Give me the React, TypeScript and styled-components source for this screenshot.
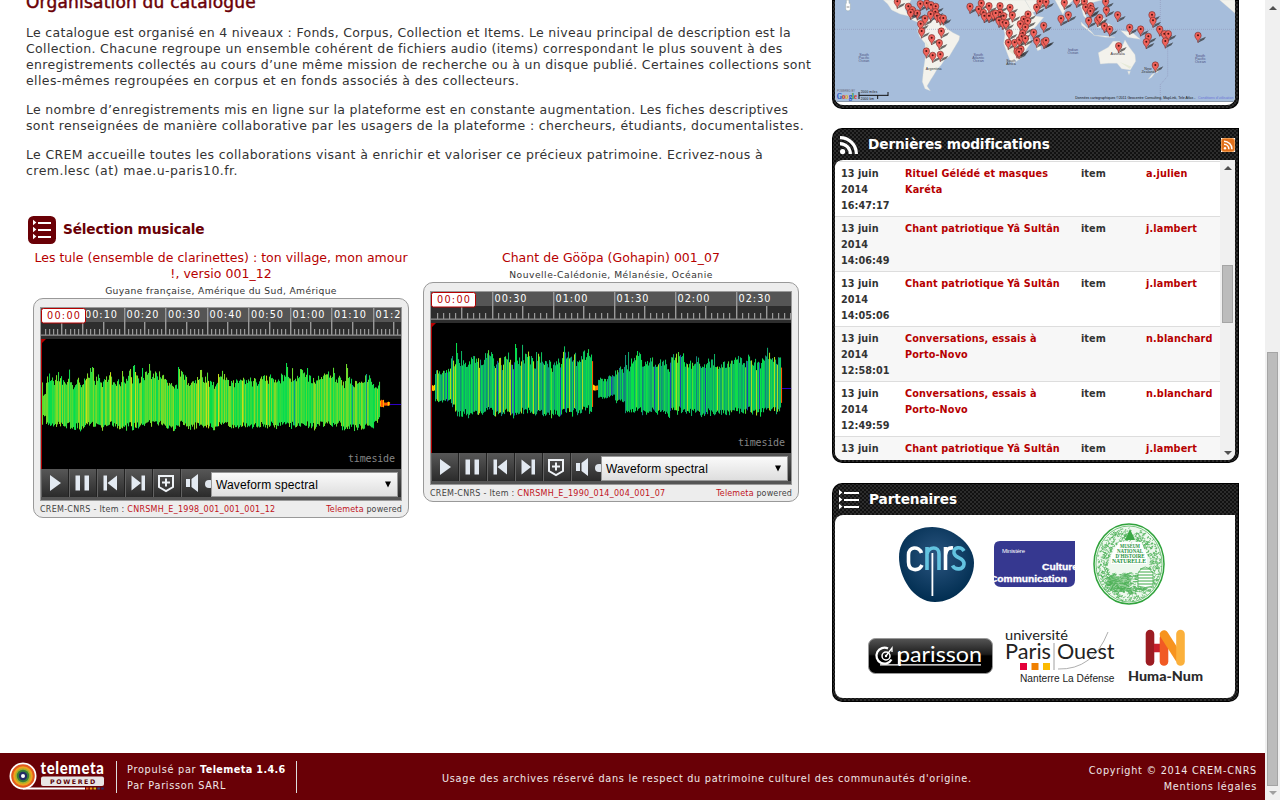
import React from "react";
import styled, { createGlobalStyle } from "styled-components";

const SANS = `"DejaVu Sans", Verdana, sans-serif`;
const ARIAL = `"Liberation Sans", Arial, sans-serif`;

const GlobalStyle = createGlobalStyle`
  * { box-sizing: border-box; }
  html, body { margin: 0; padding: 0; background: #fff; overflow: hidden; }
  body { font-family: ${SANS}; color: #333; }
  p, h1, h2, h3 { margin: 0; }
  svg { display: block; flex: none; }
`;

const Window = styled.div`
  display: flex;
  width: 1280px;
  height: 800px;
  overflow: hidden;
`;
const Page = styled.div`
  width: 1265px;
  display: flex;
  flex-direction: column;
`;
const Body = styled.main`
  height: 753px;
  display: flex;
  overflow: hidden;
`;
const LeftColumn = styled.section`
  width: 832px;
  padding-left: 26px;
  white-space: nowrap;
`;
const RightColumn = styled.aside`
  width: 407px;
  display: flex;
  flex-direction: column;
`;
const PageTitle = styled.h1`
  height: 24px;
  margin-top: -8px;
  font-size: 17px;
  line-height: 20px;
  font-weight: 400;
  letter-spacing: 0.2px;
  color: #6a0006;
  -webkit-text-stroke: 0.45px #6a0006;
`;
const Prose = styled.div`
  padding-top: 9px;
  display: flex;
  flex-direction: column;
  gap: 13px;
`;
const Line = styled.span<{ $ls: number }>`
  display: block;
  font-size: 12.5px;
  line-height: 16px;
  letter-spacing: ${(p) => p.$ls}px;
`;
const SectionHead = styled.div`
  display: flex;
  align-items: center;
  gap: 7px;
  margin: 37px 0 0 2px;
  height: 28px;
`;
const SectionTitle = styled.h2`
  font-size: 13.7px;
  line-height: 20px;
  font-weight: 700;
  color: #6a0006;
  letter-spacing: -0.18px;
  margin-top: -2px;
`;
const PlayerRow = styled.div`
  display: flex;
  align-items: flex-start;
  gap: 14px;
  margin: 6px 0 0 7px;
`;
const Item = styled.article`
  width: 376px;
  text-align: center;
`;
const ItemLink = styled.a`
  display: block;
  color: #b60000;
  font-size: 12.5px;
  line-height: 16px;
  letter-spacing: 0.03px;
`;
const ItemPlace = styled.div<{ $ls: number }>`
  font-size: 9.2px;
  line-height: 16px;
  height: 16px;
  padding-top: 1px;
  letter-spacing: ${(p) => p.$ls}px;
`;
const PlayerFrame = styled.div`
  height: 220px;
  border: 1px solid #999;
  border-radius: 10px;
  background: #ededed;
  padding: 8px 6px 0;
`;
const Screen = styled.div`
  border: 1px solid #999;
  height: 194px;
  background: #555;
  overflow: hidden;
`;
const Controls = styled.div`
  display: flex;
  height: 28px;
  position: relative;
  background: linear-gradient(#575757, #2b2b2b);
`;
const ControlButton = styled.span<{ $last?: boolean }>`
  width: 28px;
  height: 28px;
  border-right: ${(p) => (p.$last ? "0" : "1px solid #222")};
  border-left: 1px solid #626262;
`;
const Knob = styled.span`
  align-self: center;
  width: 9px;
  height: 8px;
  margin: 2px 0 0 -4px;
  border-radius: 4px;
  background: #dfe5ec;
`;
const Select = styled.div`
  position: absolute;
  left: 170px;
  top: 3px;
  width: 187px;
  height: 25px;
  border: 1px solid #999;
  background: linear-gradient(#fafafa, #dedede);
  display: flex;
  align-items: center;
  justify-content: space-between;
  padding: 0 5px 0 4px;
  font: 12px ${ARIAL};
  letter-spacing: 0.14px;
  color: #000;
`;
const Credits = styled.div`
  display: flex;
  justify-content: space-between;
  font-size: 8px;
  line-height: 14px;
  color: #444;
  padding-top: 2px;
  letter-spacing: 0.27px;
`;
const Red = styled.span`
  color: #c0131b;
`;
const Brand = styled.span`
  letter-spacing: 0.15px;
`;

const Panel = styled.section<{ $h: number; $mt?: number; $flatTop?: boolean }>`
  height: ${(p) => p.$h}px;
  margin-top: ${(p) => p.$mt ?? 0}px;
  flex: none;
  padding: 0 4px 0 3px;
  border-radius: ${(p) => (p.$flatTop ? "0 0 10px 10px" : "10px 0 10px 10px")};
  box-shadow: inset 0 0 0 1px #000;
  background-color: #111;
  background-image: radial-gradient(circle at 1px 1px, #2c2c2c 0.9px, transparent 1.2px),
    radial-gradient(circle at 3px 3px, #2c2c2c 0.9px, transparent 1.2px);
  background-size: 4px 4px;
`;
const PanelHead = styled.header`
  height: 32px;
  display: flex;
  align-items: center;
  padding: 2px 0 0 4px;
`;
const PanelTitle = styled.h2`
  flex: 1;
  color: #fff;
  font-size: 13.7px;
  line-height: 20px;
  font-weight: 700;
  letter-spacing: -0.13px;
  padding-left: 9px;
  margin-top: -2px;
`;
const PanelBody = styled.div<{ $h: number }>`
  height: ${(p) => p.$h}px;
  background: #fff;
  border-radius: 8px 0 8px 8px;
  overflow: hidden;
  display: flex;
`;
const MapBody = styled.div`
  height: 105px;
  background: #fff;
  border-radius: 0 0 8px 8px;
  overflow: hidden;
`;
const Table = styled.div`
  width: 385px;
  padding-top: 1px;
`;
const Row = styled.div<{ $alt: boolean }>`
  display: grid;
  grid-template-columns: 64px 176px 65px 1fr;
  height: 55px;
  border-top: 1px solid #ddd;
  background: ${(p) => (p.$alt ? "#f7f7f7" : "#fff")};
  padding: 4px 0 0 6px;
  font-size: 9.7px;
  line-height: 16px;
  font-weight: 700;
  white-space: nowrap;
`;
const Cell = styled.span<{ $link?: boolean }>`
  color: ${(p) => (p.$link ? "#b60000" : "#333")};
  letter-spacing: ${(p) => (p.$link ? 0.13 : 0.05)}px;
  white-space: pre-line;
`;
const ScrollTrack = styled.div<{ $pad: number }>`
  width: 15px;
  background: #f0f0f0;
  display: flex;
  flex-direction: column;
  align-items: center;
  padding-top: ${(p) => p.$pad}px;
`;
const Thumb = styled.div<{ $h: number; $mt: number }>`
  width: 11px;
  height: ${(p) => p.$h}px;
  margin-top: ${(p) => p.$mt}px;
  background: #bcbcbc;
  border: 1px solid #a5a5a5;
  flex: none;
`;
const Arrow = styled.i<{ $down?: boolean; $mt?: number; $c?: string }>`
  border: 4px solid transparent;
  border-top: ${(p) => (p.$down ? `4px solid ${p.$c ?? "#505050"}` : "0")};
  border-bottom: ${(p) => (p.$down ? "0" : `4px solid ${p.$c ?? "#505050"}`)};
  margin-top: ${(p) => p.$mt ?? 0}px;
`;
const Logos = styled.div`
  flex: 1;
  display: flex;
  flex-direction: column;
`;
const LogoRow = styled.div<{ $h: number; $pl: number }>`
  height: ${(p) => p.$h}px;
  padding-left: ${(p) => p.$pl}px;
  display: flex;
  align-items: center;
`;
const Gap = styled.span<{ $w: number }>`
  width: ${(p) => p.$w}px;
  flex: none;
`;

const Footer = styled.footer`
  height: 47px;
  background: #690006;
  color: #f0e8e8;
  display: flex;
  align-items: flex-start;
  font-size: 9.7px;
  line-height: 16px;
  letter-spacing: 0.73px;
  padding: 8px 8px 0 9px;
  white-space: nowrap;
`;
const Powered = styled.div`
  margin-left: 11px;
  width: 181px;
  height: 32px;
  border: solid #ddd;
  border-width: 0 1px;
  padding: 1px 0 0 10px;
`;
const Product = styled.b`
  letter-spacing: 0.36px;
  color: #fff;
`;
const Usage = styled.div`
  margin: 10px 0 0 145px;
  width: 531px;
`;
const Legal = styled.div`
  flex: 1;
  text-align: right;
  padding-top: 2px;
`;

const ListIcon = ({ boxed }: { boxed?: boolean }) => (
  <svg width={boxed ? 28 : 21} height={boxed ? 28 : 22} viewBox={boxed ? "0 0 28 28" : "5 3 21 22"}>
    {boxed && <rect width="28" height="28" rx="5.5" fill="#6a0006" />}
    {[6.5, 13.5, 20.5].map((y) => (
      <g key={y} fill="#fff">
        <path d={`M5 ${y - 2.8}L8.4 ${y}L5 ${y + 2.8}Z`} />
        <rect x={10} y={y - 0.5} width={boxed ? 13 : 15} height="2" />
      </g>
    ))}
  </svg>
);

const FeedIcon = () => (
  <svg width="20" height="20" viewBox="0 0 20 20" fill="none" stroke="#fff" strokeWidth="3.2">
    <circle cx="3.6" cy="16.6" r="2.6" fill="#fff" stroke="none" />
    <path d="M1 8.6A10.3 10.3 0 0 1 11.3 19M1 2.6A16.4 16.4 0 0 1 17.4 19" />
  </svg>
);
const FeedBadge = () => (
  <svg width="14" height="14" viewBox="0 0 14 14" fill="none" stroke="#fff" strokeWidth="1.5">
    <rect width="14" height="14" rx="2" fill="#e2711d" />
    <rect x="0.5" y="0.5" width="13" height="13" rx="2" stroke="#f09a4e" strokeWidth="1" />
    <circle cx="4" cy="10.2" r="1.2" fill="#fff" stroke="none" />
    <path d="M3 6.3A5 5 0 0 1 7.9 11.3M3 3.2A8 8 0 0 1 11 11.3" />
  </svg>
);

function makeRandom(seed: number) {
  let s = seed;
  return () => {
    s = (s * 1664525 + 1013904223) % 4294967296;
    return s / 4294967296;
  };
}

interface Segment {
  to: number;
  amp: number;
  kind: "green" | "mixed" | "hot" | "line";
}
interface Track {
  title: string[];
  place: string;
  placeLs: number;
  code: string;
  step: number;
  labels: string[];
  seed: number;
  segments: Segment[];
  peaks: Record<number, number>;
}

const GREENS = ["#35dc3c", "#4fdc35", "#1fdd48", "#6fdb2c", "#08dd4c", "#8ad926", "#2fdc3e", "#5bdb30", "#80da28", "#12d850"];
const MIXED = ["#0bc25c", "#08df4a", "#0ea66c", "#12907a", "#1bd44a", "#0cb062", "#4fdc35", "#16827d", "#04d854", "#0bc25c", "#10b566", "#0ea66c", "#0bc25c", "#a8df20"];
const HOT = ["#ffb000", "#ff7a00", "#ffd800", "#ff5a00"];

function columns(t: Track) {
  const rnd = makeRandom(t.seed);
  const out: { x: number; top: number; bottom: number; fill: string }[] = [];
  let drift = 0;
  for (let x = 0; x < 359; x++) {
    const seg = t.segments.find((s) => x < s.to)!;
    if (seg.kind === "line") {
      out.push({ x, top: 65, bottom: 66, fill: "#2d00c4" });
      continue;
    }
    drift = drift * 0.68 + (rnd() - 0.5) * 0.4;
    const spike = rnd() > 0.93 ? 1.22 : 1;
    const up = t.peaks[x] ?? seg.amp * (1 + drift) * spike * (0.88 + rnd() * 0.24);
    const down = seg.amp * (0.94 - drift * 0.45) * (0.82 + rnd() * 0.26);
    const palette = seg.kind === "hot" ? HOT : seg.kind === "green" ? GREENS : MIXED;
    let fill = palette[Math.floor(rnd() * palette.length)];
    if (seg.kind === "green" && rnd() > 0.97) fill = x > 250 ? "#12948a" : "#c8e018";
    if (seg.kind === "mixed" && rnd() > 0.97) fill = "#2148a8";
    out.push({ x, top: 65 - up, bottom: 65 + down, fill });
  }
  return out;
}

const Scope = ({ track }: { track: Track }) => {
  const ticks = [];
  for (let i = 1; i * (track.step / 10) < 360; i++) {
    const x = i * (track.step / 10);
    const y = i % 10 === 0 ? 0 : i % 5 === 0 ? 14 : 21;
    ticks.push(<rect key={i} x={Math.floor(x)} y={y} width={i % 5 === 0 ? 1.4 : 1.2} height={27 - y} fill="#999" />);
  }
  return (
    <svg width="360" height="161" viewBox="0 0 360 161" fontFamily={SANS}>
      <rect width="360" height="14" fill="#555" />
      <rect y="14" width="360" height="17" fill="#2d2d2d" />
      {ticks}
      <rect y="26.5" width="360" height="1.3" fill="#8e8e8e" />
      {track.labels.map((l, i) => (
        <text key={l} x={(i + 1) * track.step + 2.5} y="10" fontSize="9.7" fill="#fff" textLength={l.length === 4 ? 25 : 32}>
          {l}
        </text>
      ))}
      <rect x="0.5" y="0.5" width="44" height="14.500" rx="2" fill="#fff" stroke="#b60000" />
      <text x="6" y="11" fontSize="9.7" fill="#b60000" textLength="33">00:00</text>
      <g transform="translate(0 31)">
        <rect width="360" height="130" fill="#000" />
        {columns(track).map((c) => (
          <rect key={c.x} x={c.x + 1} y={c.top} width="1.05" height={c.bottom - c.top} fill={c.fill} />
        ))}
        <rect width="1" height="130" fill="#b60000" />
        <path d="M0 0H5L0 5Z" fill="#b60000" />
        <text x="307" y="123" fontFamily='"DejaVu Sans Mono", monospace' fontSize="10" fill="#858585" textLength="47">timeside</text>
      </g>
    </svg>
  );
};

const ICON_PATHS = [
  "M8 6V22L19 14Z",
  "M5.500 6.5H10V21.5H5.500ZM14.500 6.5H19V21.5H14.500Z",
  "M5.5 6.5H9V21.5H5.5ZM19 6.5V21.5L9.500 14Z",
  "M15.500 6.5H19V21.5H15.500ZM5.500 6.5V21.5L15 14Z",
];

const Player = ({ track }: { track: Track }) => (
  <Item>
    {track.title.map((t) => (
      <ItemLink key={t}>{t}</ItemLink>
    ))}
    <ItemPlace $ls={track.placeLs}>{track.place}</ItemPlace>
    <PlayerFrame>
      <Screen>
        <Scope track={track} />
        <Controls>
          {ICON_PATHS.map((d) => (
            <ControlButton key={d}>
              <svg width="26" height="28" viewBox="0 0 26 28"><path d={d} fill="#e3eaf2" /></svg>
            </ControlButton>
          ))}
          <ControlButton>
            <svg width="26" height="28" viewBox="0 0 26 28">
              <path d="M5 7H19V18L12 22L5 18Z" fill="none" stroke="#eef2f6" strokeWidth="2" />
              <path d="M12 9.5V17.5M8 13.5H16" stroke="#eef2f6" strokeWidth="2" />
            </svg>
          </ControlButton>
          <ControlButton $last>
            <svg width="26" height="28" viewBox="0 0 26 28">
              <path d="M4 10H8V18H4ZM9.5 10L16 5V23L9.5 18Z" fill="#e3eaf2" />
            </svg>
          </ControlButton>
          <Knob />
          <Select>
            <span>Waveform spectral</span>
            <svg width="8" height="8" viewBox="0 0 8 8"><path d="M1 0.5H7L4 6.500Z" /></svg>
          </Select>
        </Controls>
      </Screen>
      <Credits>
        <span>CREM-CNRS - Item : <Red>{track.code}</Red></span>
        <Brand><Red>Telemeta</Red> powered</Brand>
      </Credits>
    </PlayerFrame>
  </Item>
);

const TRACKS: Track[] = [
  {
    title: ["Les tule (ensemble de clarinettes) : ton village, mon amour", "!, versio 001_12"],
    place: "Guyane française, Amérique du Sud, Amérique",
    placeLs: 0.36,
    code: "CNRSMH_E_1998_001_001_001_12",
    step: 41.5,
    labels: ["00:10", "00:20", "00:30", "00:40", "00:50", "01:00", "01:10", "01:2"],
    seed: 11,
    segments: [
      { to: 1, amp: 25, kind: "green" },
      { to: 4, amp: 12, kind: "green" },
      { to: 332, amp: 24, kind: "green" },
      { to: 338, amp: 18, kind: "green" },
      { to: 342, amp: 3.5, kind: "hot" },
      { to: 348, amp: 1.8, kind: "hot" },
      { to: 360, amp: 1, kind: "line" },
    ],
    peaks: { 48: 36, 50: 37, 51: 36, 80: 33, 91: 38, 92: 39, 93: 32, 100: 36, 136: 37, 137: 35, 158: 34, 244: 41, 245: 37, 258: 35, 304: 40, 305: 36, 324: 30 },
  },
  {
    title: ["Chant de Gööpa (Gohapin) 001_07"],
    place: "Nouvelle-Calédonie, Mélanésie, Océanie",
    placeLs: 0.5,
    code: "CNRSMH_E_1990_014_004_001_07",
    step: 61,
    labels: ["00:30", "01:00", "01:30", "02:00", "02:30"],
    seed: 77,
    segments: [
      { to: 3, amp: 3, kind: "hot" },
      { to: 19, amp: 15, kind: "mixed" },
      { to: 23, amp: 22, kind: "mixed" },
      { to: 160, amp: 27, kind: "mixed" },
      { to: 161, amp: 23, kind: "hot" },
      { to: 166, amp: 2.5, kind: "hot" },
      { to: 183, amp: 10, kind: "mixed" },
      { to: 193, amp: 16, kind: "mixed" },
      { to: 349, amp: 26, kind: "mixed" },
      { to: 350, amp: 18, kind: "hot" },
      { to: 360, amp: 1, kind: "line" },
    ],
    peaks: { 20: 32, 24: 45, 25: 35, 29: 37, 83: 44, 84: 40, 104: 36, 193: 33, 196: 36, 205: 37, 206: 32, 282: 34 },
  },
];

const PINS = "217,5 250,20 262,30 277,40 257,38 286,12 305,10 318,15 332,20 331,36 317,43 336,48 346,55 355,55 300,56 287,72 290,94 349,94 320,114 343,129 304,154 323,167 346,164 435,20 469,10 461,28 475,38 492,18 478,48 492,48 505,43 525,18 525,38 536,48 512,40 555,23 562,46 522,62 533,68 543,70 609,43 596,58 608,63 586,72 601,82 553,99 593,100 550,128 569,128 583,120 590,110 601,116 626,98 635,122 656,77 657,126 663,122 588,148 576,154 582,156 635,22 645,5 663,6 718,8 708,56 730,45 755,2 778,5 782,22 797,18 800,28 796,34 842,5 844,30 878,45 791,62 818,60 824,53 838,78 854,88 914,83 947,88 970,110 964,126 881,138 981,45 984,62 1004,88 1018,102 1030,102 1021,124 1119,107 991,196"
  .split(" ")
  .map((p) => p.split(",").map(Number));

const SEA_LABELS: [number, number, string[]][] = [
  [117, 166, ["South", "Pacific", "Ocean"]],
  [460, 166, ["South", "Atlantic", "Ocean"]],
  [744, 150, ["Indian", "Ocean"]],
  [1126, 168, ["South", "Pacific", "Ocean"]],
];
const LAND_LABELS: [number, number, string][] = [
  [878, 164, "Australia"],
  [326, 211, "Argentina"],
  [558, 187, "South"],
  [558, 194, "Africa"],
  [969, 211, "New"],
  [969, 219, "Zealand"],
];

const WorldMap = () => (
  <svg width="400" height="102" viewBox="30 0 1200 306" fontFamily={ARIAL}>
    <rect x="30" width="1200" height="306" fill="#a6bddb" />
    <g fill="#f3f2ec" stroke="#d7dbd6" strokeWidth="1">
      <path d="M175 0L188 12L200 30L225 42L250 48L262 60L282 68L286 60L262 50L245 38L240 25L252 12L258 0Z" />
      <path d="M282 68L278 95L285 112L300 130L302 165L296 205L292 245L300 266L316 272L306 258L318 238L328 222L336 208L348 196L358 180L372 170L384 150L402 120L404 108L384 98L366 86L352 68L330 60L300 56Z" />
      <path d="M470 0L455 22L460 42L476 54L505 54L522 60L534 78L540 104L536 130L546 158L556 184L568 188L592 172L604 148L618 128L612 100L636 76L656 52L630 48L612 20L600 0Z" />
      <path d="M600 0L622 38L650 26L672 8L668 0ZM690 0L705 28L714 44L724 22L744 0ZM750 0L768 20L776 48L786 58L780 34L796 40L808 26L800 8L830 0Z" />
      <path d="M644 124L648 148L638 152L632 138ZM768 66L800 96L808 106L770 76ZM806 106L842 112L870 112L842 108ZM815 60L838 54L836 84L816 82ZM848 70L862 78L852 98ZM888 92L920 96L946 118L908 112ZM840 18L850 30L846 44L838 34Z" />
      <path d="M820 158L850 142L864 124L884 124L892 138L900 120L912 140L930 164L932 184L916 210L890 206L876 190L850 190L826 192ZM908 214L916 214L912 224ZM992 200L1004 208L996 218L986 214ZM990 218L980 232L970 238L980 224Z" />
      <path d="M278 8L312 8L340 14L330 20L290 14ZM1184 0L1230 40V0Z" />
    </g>
    <path d="M548 150L570 140L590 158L566 164ZM340 140L352 130L350 160ZM300 120L312 140L306 150ZM884 186L920 200L914 206Z" fill="#e6ead8" />
    <path d="M30 88H1230M1006 0V86M1028 110V228L1006 254V306" fill="none" stroke="#8d8fb5" strokeWidth="1.6" strokeDasharray="3 3" />
    <g fontSize="11" fill="#4a5080" textAnchor="middle">
      {SEA_LABELS.map(([x, y, ls]) => ls.map((l, i) => <text key={`${x}${l}`} x={x} y={y + 2 + i * 9}>{l}</text>))}
    </g>
    <g fontSize="11" fill="#333" textAnchor="middle">
      {LAND_LABELS.map(([x, y, l]) => <text key={l + y} x={x} y={y}>{l}</text>)}
    </g>
    {PINS.map(([x, y]) => (
      <g key={`${x}-${y}`}>
        <path d={`M${x} ${y + 21}L${x + 7} ${y + 10}L${x + 24} ${y + 3}L${x + 18} ${y + 12}Z`} fill="#222" opacity="0.65" />
        <path d={`M${x} ${y + 21}C${x - 1} ${y + 10} ${x - 10} ${y + 8} ${x - 9.5} ${y - 1}A9.5 9.5 0 0 1 ${x + 9.5} ${y - 1}C${x + 10} ${y + 8} ${x + 1} ${y + 10} ${x} ${y + 21}Z`} fill="#f0625a" stroke="#722a27" strokeWidth="1.8" />
        <circle cx={x} cy={y - 1} r="3" fill="#4a1210" />
      </g>
    ))}
    <path d="M64 0H72V10H76V28Q69 38 62 28V10H64Z" fill="#fff" stroke="#9aa" strokeWidth="1.5" />
    <path d="M65 21H73" stroke="#555" strokeWidth="2" />
    <text x="35" y="296" fontSize="25" fontWeight="700" fontFamily={`"Liberation Serif", serif`} textLength="61" lengthAdjust="spacingAndGlyphs">
      <tspan fill="#1f4fc4">G</tspan><tspan fill="#d6352b">o</tspan><tspan fill="#e3b21c">o</tspan><tspan fill="#1f4fc4">g</tspan><tspan fill="#2f9a44">l</tspan><tspan fill="#d6352b">e</tspan>
    </text>
    <text x="36" y="277" fontSize="8" fill="#667">POWERED BY</text>
    <text x="107" y="278" fontSize="9.5" fill="#111" textLength="50">2000 miles</text>
    <text x="107" y="299" fontSize="9.5" fill="#111" textLength="40">2000 km</text>
    <path d="M102 276V297M102 286H189M189 276V288M158 286V297" stroke="#111" strokeWidth="3" fill="none" />
    <text x="751" y="297" fontSize="10.5" fill="#111" textLength="360">Données cartographiques ©2011 Geocentre Consulting, MapLink, Tele Atlas -</text>
    <text x="1119" y="297" fontSize="10.5" fill="#6a72d8" textLength="106">Conditions d'utilisation</text>
    <rect x="30" y="303" width="1200" height="3" fill="#8a97a8" />
  </svg>
);

const MODIFICATIONS = [
  ["16:47:17", "Rituel Gélédé et masques\nKaréta", "a.julien"],
  ["14:06:49", "Chant patriotique Yâ Sultân", "j.lambert"],
  ["14:05:06", "Chant patriotique Yâ Sultân", "j.lambert"],
  ["12:58:01", "Conversations, essais à\nPorto-Novo", "n.blanchard"],
  ["12:49:59", "Conversations, essais à\nPorto-Novo", "n.blanchard"],
  ["", "Chant patriotique Yâ Sultân", "j.lambert"],
];

const CnrsLogo = () => (
  <svg width="75" height="75" viewBox="0 0 75 75">
    <defs>
      <radialGradient id="cnrs" cx="0.5" cy="0.4" r="0.6">
        <stop offset="0" stopColor="#2b5580" /><stop offset="1" stopColor="#002d50" />
      </radialGradient>
    </defs>
    <path d="M33 0C52 0 75 16 75 36C75 56 57 75 36 75C14 75 0 50 0 30C0 12 14 0 33 0Z" fill="url(#cnrs)" />
    <g fill="none" strokeWidth="3.6" strokeLinecap="butt">
      <path d="M22.500 26C20 19 9.500 19 9.500 28V35C9.500 44.500 20 44.500 23 38" stroke="#fff" />
      <path d="M28 43V20M28 27C30 19 40 19 40 27V43" stroke="#63c3e0" />
      <path d="M46.500 43V20M46.500 28C47.500 21.500 50 20.500 54 21" stroke="#fff" />
      <path d="M65 24C62 19 54 20 55 26C56 32 65.500 30 65 37C64.500 43 56 43.500 53.500 38.500" stroke="#63c3e0" />
    </g>
    <rect x="32.500" y="26" width="1.800" height="43" fill="#fff" />
  </svg>
);

const CultureLogo = () => (
  <svg width="81" height="46" viewBox="0 0 81 46" fontFamily={ARIAL} fill="#fff">
    <path d="M6 0H81V39Q81 46 74 46H7Q0 46 0 39V6Q0 0 6 0Z" fill="#363890" />
    <text x="8" y="11.500" fontSize="6" textLength="23">Ministère</text>
    <g fontWeight="700" fontSize="9.600" stroke="#fff" strokeWidth="0.350">
      <text x="48" y="29" textLength="36" lengthAdjust="spacingAndGlyphs">Culture</text>
      <text x="-4" y="40.500" textLength="77" lengthAdjust="spacingAndGlyphs">Communication</text>
    </g>
  </svg>
);

const foliage = (() => {
  const rnd = makeRandom(5);
  const out: string[] = [];
  for (let i = 0; i < 620; i++) {
    const a = rnd() * Math.PI * 2;
    const r = 0.62 + rnd() * 0.32;
    const x = 36 + Math.cos(a) * 34 * r;
    const y = 41 + Math.sin(a) * 39 * r;
    out.push(`M${x.toFixed(1)} ${y.toFixed(1)}q${(rnd() * 4 - 2).toFixed(1)} ${(rnd() * 3).toFixed(1)} ${(rnd() * 5 - 2.5).toFixed(1)} ${(rnd() * 4 - 2).toFixed(1)}`);
  }
  for (let i = 0; i < 260; i++) {
    const x = 12 + rnd() * 44;
    const y = 50 + rnd() * 19;
    out.push(`M${x.toFixed(1)} ${y.toFixed(1)}q1 ${(rnd() * 2 - 1).toFixed(1)} ${(2 + rnd() * 2).toFixed(1)} ${(rnd() * 2 - 1).toFixed(1)}`);
  }
  return out.join("");
})();

const MuseumLogo = () => (
  <svg width="72" height="82" viewBox="0 0 72 82" fontFamily={`"Liberation Serif", serif`}>
    <ellipse cx="36" cy="41" rx="35" ry="40" fill="#eef8ee" stroke="#2fa33b" strokeWidth="1.5" />
    <ellipse cx="36" cy="41" rx="33" ry="38" fill="none" stroke="#2fa33b" strokeWidth="0.6" />
    <path d={foliage} fill="none" stroke="#4fb259" strokeWidth="0.750" />
    <path d="M37 6L42 17H32Z" fill="#3aa845" />
    <path d="M16 62V56Q22 50 28 55L36 54V66L26 68Z" fill="#4bb054" opacity="0.5" />
    <path d="M45 63V50Q52 38 60 50V63Q52 66 45 63Z" fill="#fff" stroke="#3aa845" strokeWidth="0.7" />
    <path d="M47 46H58M45.500 49H60M45 52H60M45 55H60M45 58H60M45 61H60" stroke="#3aa845" strokeWidth="1" />
    <path d="M26 19H48L54 32V41H18V32Z" fill="#fff" />
    <g fill="#23913a" fontWeight="700" fontSize="5.600" textAnchor="middle">
      <text x="37" y="25" textLength="20" lengthAdjust="spacingAndGlyphs">MUSÉUM</text>
      <text x="37" y="30" textLength="26" lengthAdjust="spacingAndGlyphs">NATIONAL</text>
      <text x="37" y="35" textLength="29" lengthAdjust="spacingAndGlyphs">D'HISTOIRE</text>
      <text x="36" y="40.300" textLength="34">NATURELLE</text>
    </g>
  </svg>
);

const ParissonLogo = () => (
  <svg width="125" height="36" viewBox="0 0 125 36">
    <defs>
      <linearGradient id="gloss" x1="0" y1="0" x2="0" y2="1">
        <stop offset="0" stopColor="#555" /><stop offset="0.450" stopColor="#1c1c1c" />
        <stop offset="0.500" stopColor="#000" /><stop offset="1" stopColor="#000" />
      </linearGradient>
    </defs>
    <rect x="0.5" y="0.5" width="124" height="35" rx="7" fill="url(#gloss)" stroke="#999" />
    <g fill="none" stroke="#fff">
      <path d="M20 10.500A8 8 0 1 0 23.500 21.500" strokeWidth="2.200" />
      <circle cx="18" cy="18" r="4" strokeWidth="1.500" />
      <path d="M18 18L24 10V14M12 26.800H113M30.500 14V27" strokeWidth="1.300" />
    </g>
    <circle cx="18" cy="18" r="1.200" fill="#fff" />
    <text x="29" y="23.500" fontFamily="Lato, sans-serif" fontSize="21" fill="#fff" textLength="85" lengthAdjust="spacingAndGlyphs">parisson</text>
  </svg>
);

const UniversityLogo = () => (
  <svg width="110" height="56" viewBox="0 0 110 56" fontFamily="Lato, sans-serif" fill="#222">
    <path d="M103 4Q88 42 53 41" fill="none" stroke="#999" strokeWidth="0.800" />
    <path d="M49 15V42" stroke="#888" strokeWidth="0.8" />
    <text x="0" y="11.500" fontSize="13" textLength="63" lengthAdjust="spacingAndGlyphs">université</text>
    <text x="0" y="30.500" fontSize="21.500" textLength="46" lengthAdjust="spacingAndGlyphs">Paris</text>
    <text x="52" y="30.500" fontSize="21.500" textLength="57.500" lengthAdjust="spacingAndGlyphs">Ouest</text>
    <rect x="15" y="35" width="7" height="7" fill="#e4003a" />
    <rect x="26.500" y="35" width="7" height="7" fill="#f08000" />
    <rect x="38" y="35" width="7" height="7" fill="#fbba00" />
    <text x="15" y="53.500" fontSize="10" fontFamily={ARIAL} textLength="94.500" lengthAdjust="spacingAndGlyphs">Nanterre La Défense</text>
  </svg>
);

const HumaNumLogo = () => (
  <svg width="75" height="55" viewBox="0 0 75 55" fill="none" strokeWidth="8.600" strokeLinecap="round">
    <path d="M22 6V33.500" stroke="#9c1c22" />
    <path d="M26 20H33" stroke="#c8202c" strokeLinecap="butt" />
    <path d="M36 10V33.500" stroke="#f15a24" />
    <path d="M36 6.500L51 30" stroke="#f7931e" />
    <path d="M52.500 6V33.500" stroke="#fbb03b" />
    <text x="0" y="52.500" fontFamily="Lato, sans-serif" fontWeight="900" fontSize="14" fill="#2b2b2b" textLength="75" lengthAdjust="spacingAndGlyphs">Huma-Num</text>
  </svg>
);

const RINGS: [number, string][] = [
  [13.5, "#fff"],
  [11.8, "#e2591f"],
  [9.8, "#efa21c"],
  [7.8, "#a5b02c"],
  [6.2, "#3a7d35"],
  [4.2, "#222a66"],
  [2, "#fff"],
];
const TelemetaLogo = () => (
  <svg width="96" height="32" viewBox="0 0 96 32">
    <path d="M14 27.500H76" stroke="#fff" strokeWidth="1.800" />
    {RINGS.map(([r, c]) => <circle key={r} cx="14" cy="15" r={r} fill={c} />)}
    <text x="31.500" y="13" fontFamily="Lato, sans-serif" fontWeight="900" fontSize="16" fill="#fff" textLength="64" lengthAdjust="spacingAndGlyphs">telemeta</text>
    <rect x="32" y="15.500" width="63" height="9.500" rx="2" fill="#e8e4e4" />
    <text x="41" y="22.800" fontFamily={SANS} fontSize="6.300" fontWeight="700" fill="#5a0006" textLength="46">POWERED</text>
    {["#e2591f", "#efa21c", "#d9c51c", "#3a4a85", "#222a66"].map((c, i) => (
      <rect key={c} x={77 + i * 3.8} y="26.500" width="2.500" height="2" fill={c} />
    ))}
  </svg>
);

export default function App() {
  return (
    <Window>
      <GlobalStyle />
      <Page>
        <Body>
          <LeftColumn>
            <PageTitle>Organisation du catalogue</PageTitle>
            <Prose>
              <p>
                <Line $ls={0.3}>Le catalogue est organisé en 4 niveaux : Fonds, Corpus, Collection et Items. Le niveau principal de description est la</Line>
                <Line $ls={0.36}>Collection. Chacune regroupe un ensemble cohérent de fichiers audio (items) correspondant le plus souvent à des</Line>
                <Line $ls={0.32}>enregistrements collectés au cours d’une même mission de recherche ou à un disque publié. Certaines collections sont</Line>
                <Line $ls={0.39}>elles-mêmes regroupées en corpus et en fonds associés à des collecteurs.</Line>
              </p>
              <p>
                <Line $ls={0.32}>Le nombre d’enregistrements mis en ligne sur la plateforme est en constante augmentation. Les fiches descriptives</Line>
                <Line $ls={0.35}>sont renseignées de manière collaborative par les usagers de la plateforme : chercheurs, étudiants, documentalistes.</Line>
              </p>
              <p>
                <Line $ls={0.345}>Le CREM accueille toutes les collaborations visant à enrichir et valoriser ce précieux patrimoine. Ecrivez-nous à</Line>
                <Line $ls={0.46}>crem.lesc (at) mae.u-paris10.fr.</Line>
              </p>
            </Prose>
            <SectionHead>
              <ListIcon boxed />
              <SectionTitle>Sélection musicale</SectionTitle>
            </SectionHead>
            <PlayerRow>
              {TRACKS.map((t) => <Player key={t.code} track={t} />)}
            </PlayerRow>
          </LeftColumn>
          <RightColumn>
            <Panel $h={109} $flatTop>
              <MapBody><WorldMap /></MapBody>
            </Panel>
            <Panel $h={335} $mt={19}>
              <PanelHead>
                <FeedIcon />
                <PanelTitle>Dernières modifications</PanelTitle>
                <FeedBadge />
              </PanelHead>
              <PanelBody $h={300}>
                <Table>
                  {MODIFICATIONS.map(([time, title, user], i) => (
                    <Row key={i} $alt={i % 2 === 1}>
                      <Cell>{time ? `13 juin\n2014\n${time}` : "13 juin"}</Cell>
                      <Cell $link>{title}</Cell>
                      <Cell>item</Cell>
                      <Cell $link>{user}</Cell>
                    </Row>
                  ))}
                </Table>
                <ScrollTrack $pad={6}>
                  <Arrow />
                  <Thumb $h={58} $mt={95} />
                  <Arrow $down $mt={128} />
                </ScrollTrack>
              </PanelBody>
            </Panel>
            <Panel $h={219} $mt={20}>
              <PanelHead>
                <ListIcon />
                <PanelTitle>Partenaires</PanelTitle>
              </PanelHead>
              <PanelBody $h={183}>
                <Logos>
                  <LogoRow $h={100} $pl={64}>
                    <CnrsLogo /><Gap $w={20} /><CultureLogo /><Gap $w={18} /><MuseumLogo />
                  </LogoRow>
                  <LogoRow $h={86} $pl={33}>
                    <ParissonLogo /><Gap $w={12} /><UniversityLogo /><Gap $w={13} /><HumaNumLogo />
                  </LogoRow>
                </Logos>
              </PanelBody>
            </Panel>
          </RightColumn>
        </Body>
        <Footer>
          <TelemetaLogo />
          <Powered>
            Propulsé par <Product>Telemeta 1.4.6</Product>
            <br />
            Par Parisson SARL
          </Powered>
          <Usage>Usage des archives réservé dans le respect du patrimoine culturel des communautés d'origine.</Usage>
          <Legal>
            Copyright © 2014 CREM-CNRS
            <br />
            Mentions légales
          </Legal>
        </Footer>
      </Page>
      <ScrollTrack $pad={6}>
        <Arrow />
        <Thumb $h={434} $mt={342} />
        <Arrow $down $mt={5} $c="#a0a0a0" />
      </ScrollTrack>
    </Window>
  );
}
